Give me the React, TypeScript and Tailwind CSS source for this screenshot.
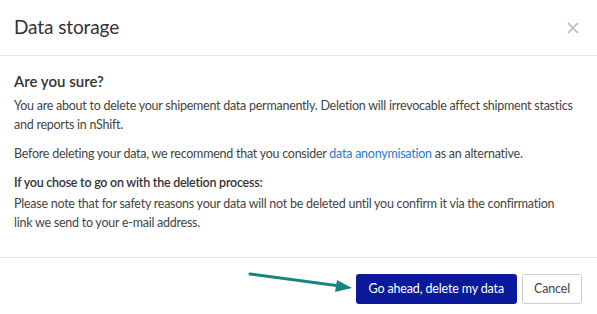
export default function App() {
  return (
    <div className="w-[597px] h-[314px] bg-white text-[#333] overflow-hidden" style={{ fontFamily: 'Lato, "Open Sans", sans-serif' }}>
      <div className="flex items-center justify-between h-[56px] pl-[14px] pr-[18px] border-b border-[#e5e5e5]">
        <h1 className="text-[19px] text-[#333] tracking-[-0.1px]">Data storage</h1>
        <svg width="12" height="12" viewBox="0 0 12 12" className="text-[#c4c4c4]">
          <path d="M1 1L11 11M11 1L1 11" stroke="currentColor" strokeWidth="1.8" />
        </svg>
      </div>
      <div className="px-[14px] pt-[16px] pb-[25px] border-b border-[#e5e5e5] text-[12.5px] tracking-[-0.25px] leading-[19px] text-[#444] whitespace-nowrap">
        <h2 className="text-[15px] tracking-normal font-semibold text-[#333] mb-[5px]">Are you sure?</h2>
        <p>
          You are about to delete your shipement data permanently. Deletion will irrevocable affect shipment stastics
          <br />and reports in nShift.
        </p>
        <p className="mt-[10px]">
          Before deleting your data, we recommend that you consider <span className="text-[#2a7bd0]">data anonymisation</span> as an alternative.
        </p>
        <p className="mt-[10px] font-semibold text-[#333]">If you chose to go on with the deletion process:</p>
        <p className="mt-[2px]">
          Please note that for safety reasons your data will not be deleted until you confirm it via the confirmation
          <br />link we send to your e-mail address.
        </p>
      </div>
      <div className="relative flex justify-end items-center gap-[5px] pt-[16px] pr-[15px]">
        <svg className="absolute left-[248px] top-[13px]" width="106" height="22" viewBox="0 0 106 22">
          <path d="M2 3L92 15" stroke="#17857f" strokeWidth="3" strokeLinecap="round" />
          <path d="M89 9L104 17L87 21Z" fill="#17857f" />
        </svg>
        <button className="h-[30px] px-[13px] rounded-[3px] bg-[#0a1a9a] text-white text-[12.5px] tracking-[-0.15px]">Go ahead, delete my data</button>
        <button className="h-[30px] px-[11px] rounded-[3px] border border-[#ccc] bg-white text-[#444] text-[12.5px] tracking-[-0.15px]">Cancel</button>
      </div>
    </div>
  );
}
